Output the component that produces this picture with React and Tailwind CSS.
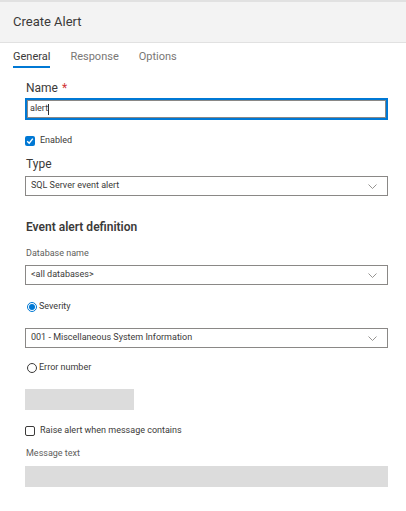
import React from "react";

function Chevron() {
  return (
    <svg width="9" height="5" viewBox="0 0 9 5" className="text-[#8a8886]">
      <path d="M0.5 0.5 L4.5 4.5 L8.5 0.5" fill="none" stroke="currentColor" strokeWidth="0.9" />
    </svg>
  );
}

function Select({ value }) {
  return (
    <div className="h-[20px] border border-[#8a8886] bg-white flex items-center justify-between pl-[5px] pr-[10px] text-[9px] text-[#3b3a39]">
      <span>{value}</span>
      <Chevron />
    </div>
  );
}

function Check({ checked, label }) {
  return (
    <div className="h-[20px] flex items-center gap-[5px] text-[9px] text-[#3b3a39]">
      {checked ? (
        <span className="w-[10px] h-[10px] rounded-[2px] bg-[#0078d4] flex items-center justify-center">
          <svg width="8" height="8" viewBox="0 0 8 8">
            <path d="M1.2 4.2 L3.2 6.2 L6.8 1.6" fill="none" stroke="white" strokeWidth="1.4" />
          </svg>
        </span>
      ) : (
        <span className="w-[10px] h-[10px] rounded-[2px] border border-[#3b3a39] bg-white" />
      )}
      <span>{label}</span>
    </div>
  );
}

function Radio({ checked, label }) {
  return (
    <div className="h-[20px] flex items-center gap-[2px] pl-[2px] text-[9px] text-[#3b3a39]">
      {checked ? (
        <span className="w-[10px] h-[10px] rounded-full border border-[#0078d4] flex items-center justify-center">
          <span className="w-[6px] h-[6px] rounded-full bg-[#0078d4]" />
        </span>
      ) : (
        <span className="w-[10px] h-[10px] rounded-full border border-[#3b3a39]" />
      )}
      <span>{label}</span>
    </div>
  );
}

export default function App() {
  return (
    <div className="w-[406px] h-[511px] bg-white overflow-hidden font-['Roboto','Open_Sans',sans-serif]">
      <div className="h-[2px] bg-[#e1e1e1]" />
      <div className="h-[41px] bg-[#f3f3f3] border-b border-[#e1e1e1] flex items-center px-[13px] text-[13px] text-[#3b3a39]">
        Create Alert
      </div>

      <div className="flex h-[25px] px-[13px] text-[11px]">
        <div className="flex flex-col justify-end mr-[20px]">
          <span className="text-[#3b3a39] leading-none pb-[4px]">General</span>
          <div className="h-[2px] bg-[#0078d4]" />
        </div>
        <div className="flex flex-col justify-end mr-[20px]">
          <span className="text-[#797775] leading-none pb-[6px]">Response</span>
        </div>
        <div className="flex flex-col justify-end">
          <span className="text-[#797775] leading-none pb-[6px]">Options</span>
        </div>
      </div>

      <div className="flex flex-col pl-[25px] w-[388px]">
        <div className="mt-[10px] h-[20px] flex items-center pl-[1px] text-[12px] text-[#3b3a39]">
          Name <span className="text-[#d13438] ml-[4px]">*</span>
        </div>
        <div className="h-[22px] border-2 border-[#0078d4] bg-white flex items-center text-[9px] text-[#3b3a39]">
          <div className="w-full h-full border border-[#8a8886] flex items-center pl-[2px]">
            alert<span className="inline-block w-px h-[11px] bg-[#323130]" />
          </div>
        </div>

        <div className="mt-[11px]">
          <Check checked label="Enabled" />
        </div>

        <div className="mt-[3px] h-[20px] flex items-center pl-[1px] text-[12px] text-[#3b3a39]">Type</div>
        <div className="mt-[2px]">
          <Select value="SQL Server event alert" />
        </div>

        <div className="mt-[21px] h-[20px] flex items-center pl-[1px] text-[12px] font-semibold text-[#3b3a39]">
          Event alert definition
        </div>

        <div className="mt-[7px] h-[20px] flex items-center pl-[1px] text-[9px] text-[#605e5c]">Database name</div>
        <div className="mt-[1px]">
          <Select value="<all databases>" />
        </div>

        <div className="mt-[12px]">
          <Radio checked label="Severity" />
        </div>
        <div className="mt-[11px]">
          <Select value="001 - Miscellaneous System Information" />
        </div>

        <div className="mt-[10px]">
          <Radio label="Error number" />
        </div>
        <div className="mt-[11px] h-[21px] w-[109px] bg-[#dcdcdc]" />

        <div className="mt-[11px]">
          <Check label="Raise alert when message contains" />
        </div>

        <div className="mt-[3px] h-[20px] flex items-center pl-[1px] text-[9px] text-[#605e5c]">Message text</div>
        <div className="mt-[2px] h-[21px] bg-[#dcdcdc]" />
      </div>
    </div>
  );
}
